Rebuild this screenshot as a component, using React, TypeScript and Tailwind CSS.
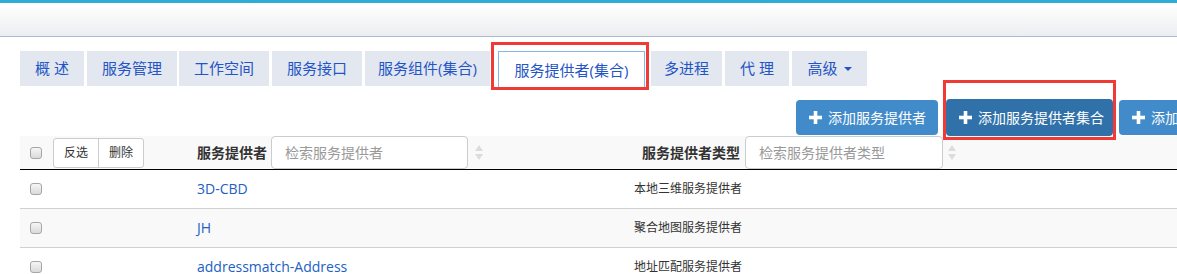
import React from "react";

const tabs = [
  { label: "概 述", cls: "w-[64px] mr-[3px]" },
  { label: "服务管理", cls: "w-[90px] mr-[2px]" },
  { label: "工作空间", cls: "w-[90px] mr-[3px]" },
  { label: "服务接口", cls: "w-[90px] mr-[3px]" },
  { label: "服务组件(集合)", cls: "w-[125px] mr-[8px]" },
];

const rows = [
  { name: "3D-CBD", type: "本地三维服务提供者" },
  { name: "JH", type: "聚合地图服务提供者" },
  { name: "addressmatch-Address", type: "地址匹配服务提供者" },
];

function Checkbox() {
  return (
    <span className="block h-[12px] w-[12px] rounded-[3px] border border-[#a6a6a6] bg-gradient-to-b from-[#f6f6f6] to-[#dadada]" />
  );
}

function SortIcon() {
  return (
    <svg width="8" height="15" viewBox="0 0 8 15" className="shrink-0">
      <path d="M4 0 L8 6 L0 6 Z" fill="#dcdcdc" />
      <path d="M0 9 L8 9 L4 15 Z" fill="#dcdcdc" />
    </svg>
  );
}

function Plus() {
  return (
    <svg width="13" height="13" viewBox="0 0 13 13" className="shrink-0">
      <rect x="4.7" y="0" width="3.6" height="13" fill="#fff" />
      <rect x="0" y="4.7" width="13" height="3.6" fill="#fff" />
    </svg>
  );
}

export default function App() {
  return (
    <div className="h-[274px] w-[1177px] overflow-hidden bg-white font-['Open_Sans','Noto_Sans_CJK_SC',sans-serif] text-[#333]">
      {/* top bar */}
      <div className="h-[3px] bg-[#2badd6]" />
      <div className="h-[34px] border-b border-[#a9bbd1] bg-gradient-to-b from-white to-[#eceef1]" />

      <div className="pl-[20px]">
        {/* tabs */}
        <div className="mt-[14px] flex items-start whitespace-nowrap">
          {tabs.map((t) => (
            <div
              key={t.label}
              className={`flex h-[35px] items-center justify-center bg-[#e3e7ef] text-[15px] leading-none text-[#2455c6] ${t.cls}`}
            >
              {t.label}
            </div>
          ))}
          <div className="relative mr-[6px]">
            <div className="flex h-[36px] w-[147px] items-center justify-center border border-[#85b6e8] border-b-0 bg-white pt-[2px] text-[15px] leading-none text-[#2455c6]">
              服务提供者(集合)
            </div>
            <div className="pointer-events-none absolute -top-[9px] -right-[4px] -bottom-[3px] -left-[7px] border-[3px] border-[#f03a36]" />
          </div>
          <div className="mr-[3px] flex h-[35px] w-[71px] items-center justify-center bg-[#e3e7ef] text-[15px] leading-none text-[#2455c6]">
            多进程
          </div>
          <div className="mr-[3px] flex h-[35px] w-[64px] items-center justify-center bg-[#e3e7ef] text-[15px] leading-none text-[#2455c6]">
            代 理
          </div>
          <div className="flex h-[35px] w-[75px] items-center justify-center gap-[6px] bg-[#e3e7ef] text-[15px] leading-none text-[#2455c6]">
            高级
            <span className="h-0 w-0 border-x-[4px] border-t-[4px] border-x-transparent border-t-[#2455c6]" />
          </div>
        </div>

        {/* action buttons */}
        <div className="mt-[13px] flex whitespace-nowrap pl-[776px] text-[14px] leading-none text-white">
          <button className="flex h-[35px] w-[142px] shrink-0 items-center gap-[6px] rounded-[4px] bg-[#428bca] pl-[13px]">
            <Plus />
            添加服务提供者
          </button>
          <div className="relative ml-[8px] shrink-0">
            <button className="flex h-[37px] w-[167px] -mt-px items-center gap-[6px] rounded-[4px] bg-[#3071a9] pl-[13px]">
              <Plus />
              添加服务提供者集合
            </button>
            <div className="pointer-events-none absolute -top-[20px] -right-[3px] -bottom-[4px] -left-[3px] border-[3px] border-[#f03a36]" />
          </div>
          <button className="ml-[6px] flex h-[35px] w-[180px] shrink-0 items-center gap-[6px] rounded-[4px] bg-[#428bca] pl-[13px]">
            <Plus />
            添加服务提供者
          </button>
        </div>

        {/* table head */}
        <div className="grid h-[34px] grid-cols-[169px_437px_1fr] border-b border-black bg-[#f9f9f9]">
          <div className="flex items-center pl-[10px]">
            <Checkbox />
            <div className="ml-[11px] flex h-[30px] rounded-[3px] border border-[#cccccc] bg-white text-[12px] leading-none">
              <span className="flex w-[45px] items-center justify-center border-r border-[#cccccc]">反选</span>
              <span className="flex w-[44px] items-center justify-center">删除</span>
            </div>
          </div>
          <div className="flex items-center pl-[8px]">
            <span className="text-[14px] font-bold leading-none text-[#333]">服务提供者</span>
            <div className="ml-[4px] flex h-[33px] w-[197px] items-center self-start rounded-[4px] border border-[#cccccc] bg-white pl-[13px] text-[14px] leading-none text-[#999]">
              检索服务提供者
            </div>
            <span className="ml-[7px]">
              <SortIcon />
            </span>
          </div>
          <div className="flex items-center pl-[16px]">
            <span className="text-[14px] font-bold leading-none text-[#333]">服务提供者类型</span>
            <div className="ml-[5px] flex h-[33px] w-[198px] items-center self-start rounded-[4px] border border-[#cccccc] bg-white pl-[13px] text-[14px] leading-none text-[#999]">
              检索服务提供者类型
            </div>
            <span className="ml-[5px]">
              <SortIcon />
            </span>
          </div>
        </div>

        {/* table rows */}
        {rows.map((r, i) => (
          <div
            key={r.name}
            className={`grid h-[39px] grid-cols-[169px_437px_1fr] border-b border-[#d0d0d0] ${i % 2 === 1 ? "bg-[#f9f9f9]" : "bg-white"}`}
          >
            <div className="flex items-center pl-[10px]">
              <Checkbox />
            </div>
            <div className="flex items-center pl-[8px] text-[14px] leading-none text-[#2160c4]">{r.name}</div>
            <div className="flex items-center pl-[8px] text-[12px] leading-none text-[#333]">{r.type}</div>
          </div>
        ))}
      </div>
    </div>
  );
}
